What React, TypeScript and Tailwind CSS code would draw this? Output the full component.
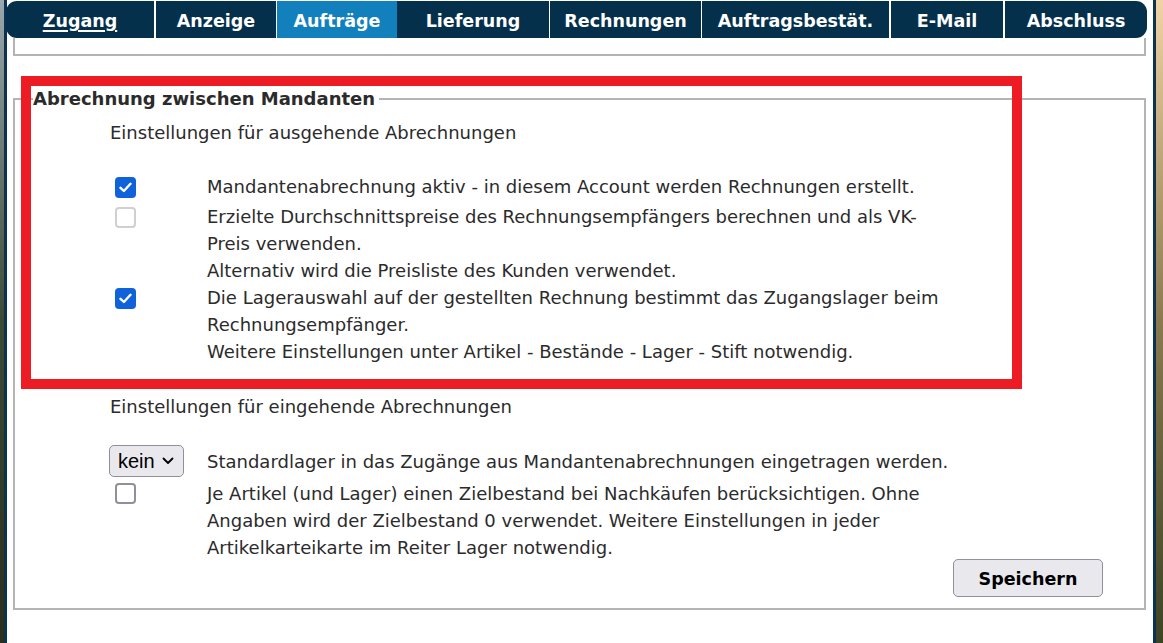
import React from 'react'

// ── Shared styles ─────────────────────────────────────────────

const font = "font-['DejaVu_Sans',Verdana,sans-serif]"
const tabCls =
  'flex h-full items-center justify-center pt-[3px] text-[17.5px] font-bold text-white bg-[#05304b]'
const sepCls = 'h-full bg-white'
const rowCls = 'flex leading-[27px]'
const cellCls = 'flex w-[97px] shrink-0 items-start'

// ── Small form controls (drawn like Firefox's) ────────────────

function Check({ on, dim }: { on?: boolean; dim?: boolean }) {
  if (on) {
    return (
      <span className="ml-[5px] mt-[4px] flex size-[21px] items-center justify-center rounded-[4px] bg-[#0f62d9]">
        <svg width="13" height="11" viewBox="0 0 13 11" fill="none">
          <path d="M1.5 5.8 L4.9 9 L11.5 1.8" stroke="white" strokeWidth="2.4" strokeLinecap="round" strokeLinejoin="round" />
        </svg>
      </span>
    )
  }
  return (
    <span
      className={
        'ml-[5px] mt-[4px] block size-[21px] rounded-[4px] border-2 bg-white ' +
        (dim ? 'border-[#cfcfd4]' : 'border-[#8f8f9d]')
      }
    />
  )
}

function Select() {
  return (
    <span className="-ml-[1px] flex h-[32px] w-[75px] items-center gap-[7px] rounded-[5px] border border-[#8f8f9d] bg-[#e9e9ed] pl-[8px] font-['Liberation_Sans',Arial,sans-serif] text-[20px] text-black">
      kein
      <svg width="12" height="8" viewBox="0 0 12 8" fill="none">
        <path d="M1.5 1.5 L6 6 L10.5 1.5" stroke="black" strokeWidth="1.8" strokeLinecap="round" strokeLinejoin="round" />
      </svg>
    </span>
  )
}

// ── Tab bar ───────────────────────────────────────────────────

function TabBar() {
  return (
    <div className="-ml-[1px] flex h-[37px] w-[1141px]">
      <div className={`${tabCls} w-[148px] rounded-l-[11px]`}>
        <span className="underline decoration-[1.5px] underline-offset-[3px]">Zugang</span>
      </div>
      <div className={`${sepCls} w-[2px]`} />
      <div className={`${tabCls} w-[120px]`}>Anzeige</div>
      <div className={`${sepCls} w-[1px]`} />
      <div className={`${tabCls} w-[120px] !bg-[#1280bd]`}>Aufträge</div>
      <div className={`${tabCls} w-[152px]`}>Lieferung</div>
      <div className={`${sepCls} w-[1px]`} />
      <div className={`${tabCls} w-[151px]`}>Rechnungen</div>
      <div className={`${sepCls} w-[1px]`} />
      <div className={`${tabCls} w-[187px]`}>Auftragsbestät.</div>
      <div className={`${sepCls} w-[2px]`} />
      <div className={`${tabCls} w-[112px]`}>E-Mail</div>
      <div className={`${sepCls} w-[2px]`} />
      <div className={`${tabCls} w-[142px] rounded-r-[11px]`}>Abschluss</div>
    </div>
  )
}

// ── Page ──────────────────────────────────────────────────────

export default function App() {
  return (
    <div className={`relative flex h-[643px] w-[1163px] overflow-hidden ${font} text-[18px] text-[#2b2b2b]`}>
      {/* background picture strip, left */}
      <div className="w-[4px] shrink-0 bg-gradient-to-b from-[#9aa8ae] via-[#3c4a34] to-[#2a2f1c]" />
      <div className="w-[3px] shrink-0 bg-[#0b3250]" />

      <main className="flex w-[1146px] shrink-0 flex-col bg-white pt-[1px]">
        <TabBar />

        {/* end of the previous box, scrolled under the tab bar */}
        <div className="ml-[6px] h-[18px] w-[1133px] border-x-2 border-b-2 border-[#b4b4b4]" />

        <fieldset className="ml-[6px] mt-[29px] w-[1133px] border-2 border-[#b4b4b4] pb-[11px]">
          <legend className="ml-[18px] pr-[4px] text-[18px] font-bold leading-[27px] text-[#2b2b2b]">
            Abrechnung zwischen Mandanten
          </legend>

          <div className="flex flex-col pl-[95px] pt-[7px]">
            <div className="leading-[27px]">Einstellungen für ausgehende Abrechnungen</div>

            <div className={`${rowCls} mt-[27px]`}>
              <div className={cellCls}><Check on /></div>
              <div>Mandantenabrechnung aktiv - in diesem Account werden Rechnungen erstellt.</div>
            </div>

            <div className={`${rowCls} mt-[3px]`}>
              <div className={cellCls}><Check dim /></div>
              <div>
                Erzielte Durchschnittspreise des Rechnungsempfängers berechnen und als VK-
                <br />
                Preis verwenden.
                <br />
                Alternativ wird die Preisliste des Kunden verwendet.
              </div>
            </div>

            <div className={rowCls}>
              <div className={cellCls}><Check on /></div>
              <div>
                Die Lagerauswahl auf der gestellten Rechnung bestimmt das Zugangslager beim
                <br />
                Rechnungsempfänger.
                <br />
                Weitere Einstellungen unter Artikel - Bestände - Lager - Stift notwendig.
              </div>
            </div>

            <div className="mt-[28px] leading-[27px]">Einstellungen für eingehende Abrechnungen</div>

            <div className="mt-[25px] flex h-[32px] items-center leading-[27px]">
              <div className="w-[97px] shrink-0"><Select /></div>
              <div>Standardlager in das Zugänge aus Mandantenabrechnungen eingetragen werden.</div>
            </div>

            <div className={`${rowCls} mt-[3px]`}>
              <div className={cellCls}><span className="-mt-[1px] flex"><Check /></span></div>
              <div>
                Je Artikel (und Lager) einen Zielbestand bei Nachkäufen berücksichtigen. Ohne
                <br />
                Angaben wird der Zielbestand 0 verwendet. Weitere Einstellungen in jeder
                <br />
                Artikelkarteikarte im Reiter Lager notwendig.
              </div>
            </div>
          </div>

          <div className="-mt-[2px] flex justify-end pr-[41px]">
            <button className="h-[38px] w-[150px] rounded-[5px] border border-[#8f8f9d] bg-[#e9e9ed] pt-[3px] text-[17.5px] font-bold text-black">
              Speichern
            </button>
          </div>
        </fieldset>
      </main>

      <div className="w-[3px] shrink-0 bg-[#0b3250]" />
      {/* background picture strip, right */}
      <div className="w-[7px] shrink-0 bg-gradient-to-b from-[#f1d3a6] via-[#8c7a4e] to-[#3d4424]" />

      {/* red annotation frame over the box */}
      <div className="pointer-events-none absolute left-[21px] top-[76px] h-[313px] w-[1001px] border-[10px] border-[#ed1c24]" />
    </div>
  )
}
